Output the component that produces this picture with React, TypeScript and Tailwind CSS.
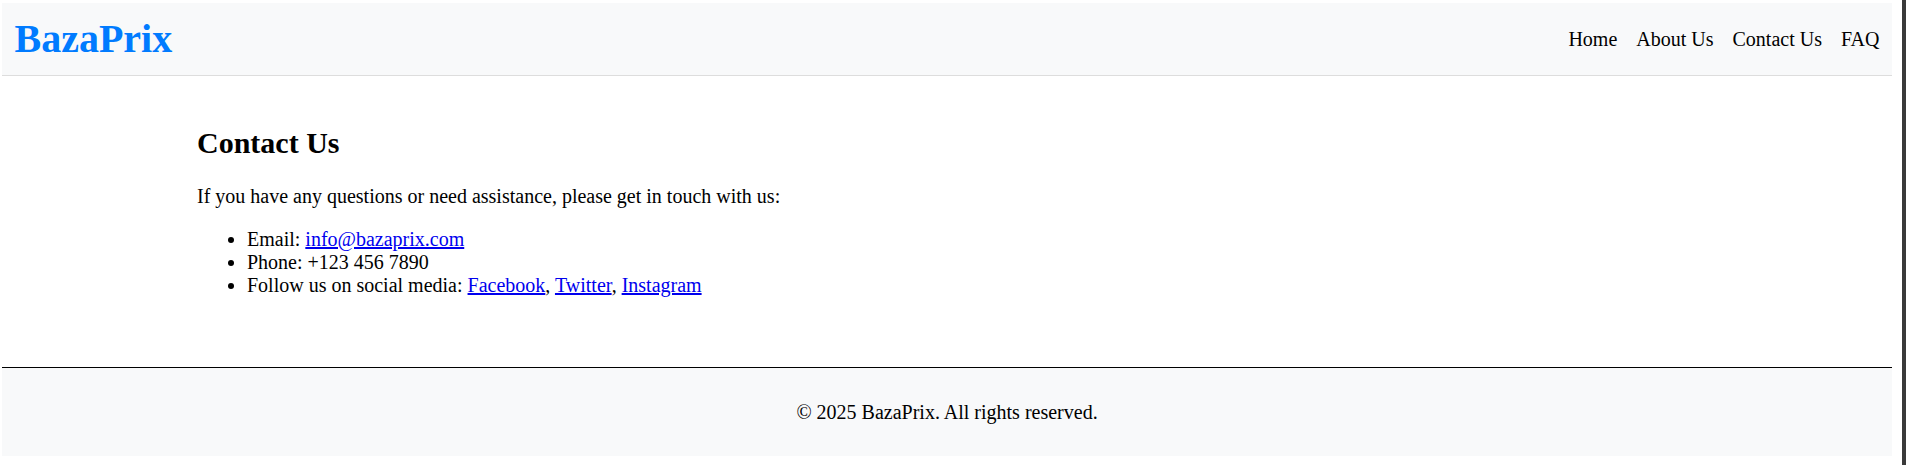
const NAV = ["Home", "About Us", "Contact Us", "FAQ"];

export default function App() {
  return (
    <div className="flex h-[465px] w-full overflow-hidden bg-white font-['Liberation_Serif','Times_New_Roman',serif] text-[20px] leading-[normal] text-black">
      <div className="ml-[2px] mt-[3px] w-[1890px] shrink-0">
        <header className="flex h-[73px] items-center justify-between border-b border-[#dddddd] bg-[#f8f9fa] px-[12.5px]">
          <h1 className="text-[40px] font-bold leading-[46px] text-[#007bff]">BazaPrix</h1>
          <nav className="flex gap-[19px]">
            {NAV.map((n) => (
              <a key={n} href="#" className="text-black no-underline">
                {n}
              </a>
            ))}
          </nav>
        </header>

        <main className="mx-auto w-full max-w-[1500px] py-[25px]">
          <h2 className="mt-[25px] mb-[25px] text-[30px] font-bold leading-[normal]">Contact Us</h2>
          <p className="mb-[20px]">
            If you have any questions or need assistance, please get in touch with us:
          </p>
          <ul className="my-[20px] list-disc pl-[50px]">
            <li>
              Email:{" "}
              <a href="#" className="text-[#0000ee] underline">
                info@bazaprix.com
              </a>
            </li>
            <li>Phone: +123 456 7890</li>
            <li>
              Follow us on social media:{" "}
              <a href="#" className="text-[#0000ee] underline">
                Facebook
              </a>
              ,{" "}
              <a href="#" className="text-[#0000ee] underline">
                Twitter
              </a>
              ,{" "}
              <a href="#" className="text-[#0000ee] underline">
                Instagram
              </a>
            </li>
          </ul>
        </main>

        <footer className="mt-[25px] border-t border-black bg-[#f8f9fa] py-[12.5px] text-center">
          <p className="my-[20px]">© 2025 BazaPrix. All rights reserved.</p>
        </footer>
      </div>
      <div className="ml-auto w-[4px] shrink-0 bg-[#3a3a3a]" />
    </div>
  );
}
